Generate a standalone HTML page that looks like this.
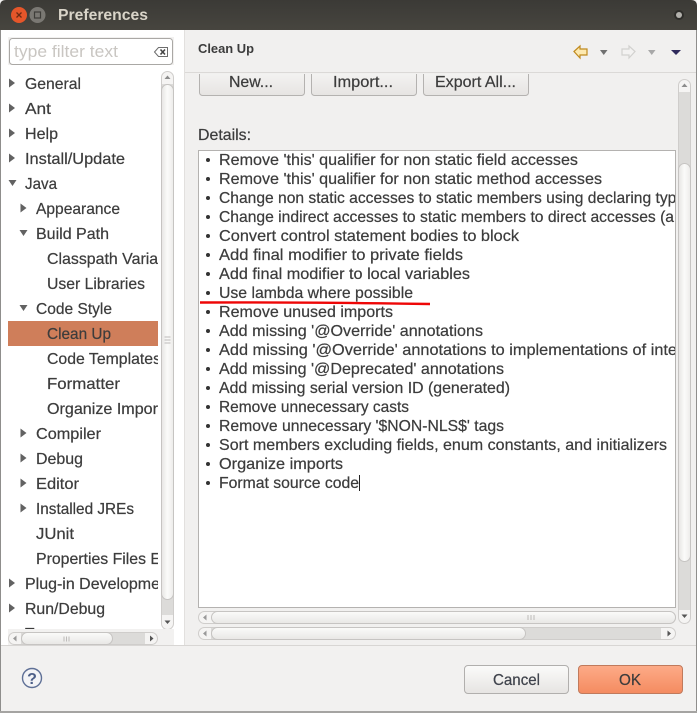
<!DOCTYPE html>
<html><head><meta charset="utf-8"><style>
html,body{margin:0;padding:0;background:#f2f1f0;width:697px;height:713px;overflow:hidden}
svg{display:block;font-family:"Liberation Sans",sans-serif}
.t{stroke:#3c3c3c;stroke-width:.22px}
</style></head><body>
<svg width="697" height="713" viewBox="0 0 697 713" xmlns="http://www.w3.org/2000/svg">
<defs>
<linearGradient id="tb" x1="0" y1="0" x2="0" y2="1"><stop offset="0" stop-color="#3b3a36"/><stop offset="1" stop-color="#47453f"/></linearGradient>
<linearGradient id="btn" x1="0" y1="0" x2="0" y2="1"><stop offset="0" stop-color="#fbfbfa"/><stop offset="1" stop-color="#e6e4e2"/></linearGradient>
<linearGradient id="ok" x1="0" y1="0" x2="0" y2="1"><stop offset="0" stop-color="#fdab88"/><stop offset="1" stop-color="#f48b60"/></linearGradient>
<linearGradient id="vth" x1="0" y1="0" x2="1" y2="0"><stop offset="0" stop-color="#e6e5e3"/><stop offset=".5" stop-color="#fbfbfa"/><stop offset="1" stop-color="#ecebe9"/></linearGradient>
<linearGradient id="hth" x1="0" y1="0" x2="0" y2="1"><stop offset="0" stop-color="#fbfbfa"/><stop offset="1" stop-color="#e8e7e5"/></linearGradient>
<clipPath id="ct"><rect x="8" y="71" width="150" height="558"/></clipPath>
<clipPath id="cd"><rect x="199" y="151" width="476" height="456"/></clipPath>
<clipPath id="cb"><rect x="190" y="74" width="350" height="30"/></clipPath>
</defs>

<rect width="697" height="713" fill="#f2f1f0"/>
<rect x="1" y="30" width="183" height="615" fill="#fff"/>
<rect x="184" y="30" width="1" height="615" fill="#e2e0de"/>
<rect x="0" y="30" width="1" height="683" fill="#8f8e8c"/>
<rect x="696" y="30" width="1" height="683" fill="#8f8e8c"/>
<rect x="0" y="711" width="697" height="2" fill="#a5a4a2"/>

<!-- title bar -->
<path d="M0 30V6Q0 0 6 0H691Q697 0 697 6V30Z" fill="url(#tb)"/>
<circle cx="19" cy="15" r="8" fill="#e5562a"/>
<path d="M16.500 12.500l5 5m0-5l-5 5" stroke="#6e2a12" stroke-width="1.300"/>
<circle cx="37.500" cy="15" r="8" fill="#7a7873"/>
<rect x="34.500" y="12" width="6" height="6" fill="none" stroke="#3e3d39" stroke-width="1.200"/>
<circle cx="679" cy="15" r="5" fill="#2e2d2a"/><circle cx="679" cy="15" r="3" fill="#b3b1ac"/>
<text x="58" y="20" font-size="16" font-weight="bold" fill="#d9d4c8" textLength="90" lengthAdjust="spacingAndGlyphs">Preferences</text>

<!-- filter -->
<rect x="8" y="37" width="166" height="28" fill="#f2f1f0"/>
<rect x="9.500" y="38.500" width="163" height="26" rx="3" fill="#fff" stroke="#aaa8a5"/>
<text x="14" y="57" font-size="16.500" fill="#c9c6c2" textLength="104" lengthAdjust="spacingAndGlyphs">type filter text</text>
<path d="M154.500 52l4-4.500h9v9h-9z" fill="#fff" stroke="#6d6d6d"/>
<path d="M160.500 49.500l4.500 5m0-5l-4.500 5" stroke="#444" stroke-width="1.600"/>

<!-- tree -->
<rect x="8" y="321" width="150" height="25" fill="#cf7e5a"/>
<g clip-path="url(#ct)" font-size="16" fill="#3c3c3c" class="t">
<text x="25" y="89" textLength="56" lengthAdjust="spacingAndGlyphs">General</text>
<text x="25" y="114" textLength="26" lengthAdjust="spacingAndGlyphs">Ant</text>
<text x="25" y="139" textLength="33" lengthAdjust="spacingAndGlyphs">Help</text>
<text x="25" y="164" textLength="100" lengthAdjust="spacingAndGlyphs">Install/Update</text>
<text x="25" y="189" textLength="32" lengthAdjust="spacingAndGlyphs">Java</text>
<text x="36" y="214" textLength="84" lengthAdjust="spacingAndGlyphs">Appearance</text>
<text x="36" y="239" textLength="73" lengthAdjust="spacingAndGlyphs">Build Path</text>
<text x="47" y="264" textLength="120" lengthAdjust="spacingAndGlyphs">Classpath Variab</text>
<text x="47" y="289" textLength="98" lengthAdjust="spacingAndGlyphs">User Libraries</text>
<text x="36" y="314" textLength="76" lengthAdjust="spacingAndGlyphs">Code Style</text>
<text x="47" y="339" textLength="64" lengthAdjust="spacingAndGlyphs">Clean Up</text>
<text x="47" y="364" textLength="114" lengthAdjust="spacingAndGlyphs">Code Templates</text>
<text x="47" y="389" textLength="73" lengthAdjust="spacingAndGlyphs">Formatter</text>
<text x="47" y="414" textLength="111" lengthAdjust="spacingAndGlyphs">Organize Impor</text>
<text x="36" y="439" textLength="65" lengthAdjust="spacingAndGlyphs">Compiler</text>
<text x="36" y="464" textLength="47" lengthAdjust="spacingAndGlyphs">Debug</text>
<text x="36" y="489" textLength="43" lengthAdjust="spacingAndGlyphs">Editor</text>
<text x="36" y="514" textLength="98" lengthAdjust="spacingAndGlyphs">Installed JREs</text>
<text x="36" y="539" textLength="38" lengthAdjust="spacingAndGlyphs">JUnit</text>
<text x="36" y="564" textLength="125" lengthAdjust="spacingAndGlyphs">Properties Files E</text>
<text x="25" y="589" textLength="135" lengthAdjust="spacingAndGlyphs">Plug-in Developme</text>
<text x="25" y="614" textLength="80" lengthAdjust="spacingAndGlyphs">Run/Debug</text>
<text x="25" y="639" textLength="38" lengthAdjust="spacingAndGlyphs">Team</text>
</g>
<g fill="#626262">
<path d="M9 78.500l6 4.500-6 4.500z"/><path d="M9 103.500l6 4.500-6 4.500z"/><path d="M9 128.500l6 4.500-6 4.500z"/><path d="M9 153.500l6 4.500-6 4.500z"/>
<path d="M8.500 180h8l-4 6z"/>
<path d="M20.500 203.500l6 4.500-6 4.500z"/>
<path d="M19.500 230h8l-4 6z"/>
<path d="M19.500 305h8l-4 6z"/>
<path d="M20.500 428.500l6 4.500-6 4.500z"/><path d="M20.500 453.500l6 4.500-6 4.500z"/><path d="M20.500 478.500l6 4.500-6 4.500z"/><path d="M20.500 503.500l6 4.500-6 4.500z"/>
<path d="M9 578.500l6 4.500-6 4.500z"/><path d="M9 603.500l6 4.500-6 4.500z"/>
</g>

<!-- left vertical scrollbar -->
<rect x="161.500" y="71.500" width="12" height="558" rx="6" fill="#f5f4f3" stroke="#cfcdcb"/>
<rect x="162" y="84" width="11" height="531" fill="#dcdbd9"/>
<rect x="161.500" y="84.500" width="12" height="515" rx="6" fill="url(#vth)" stroke="#c6c4c2"/>
<path d="M164.500 337h6M164.500 340h6M164.500 343h6" stroke="#bdbbb9"/>
<path d="M167.500 75.500l3 3.500h-6z" fill="#8c8c8c"/>
<path d="M167.500 624l-3-3.500h6z" fill="#555"/>

<!-- left horizontal scrollbar -->
<rect x="8" y="629" width="166" height="16" fill="#f2f1f0"/>
<rect x="8.500" y="632.500" width="149" height="12" rx="6" fill="#f5f4f3" stroke="#cfcdcb"/>
<rect x="21" y="633" width="124" height="11" fill="#dcdbd9"/>
<rect x="21.500" y="632.500" width="91" height="12" rx="6" fill="url(#hth)" stroke="#c6c4c2"/>
<path d="M64 636.500v5M66.500 636.500v5M69 636.500v5" stroke="#bdbbb9"/>
<path d="M13 638.500l3.500-3v6z" fill="#999"/>
<path d="M153.500 638.500l-3.500-3v6z" fill="#555"/>

<!-- right header -->
<rect x="185" y="30" width="511" height="615" fill="#f1f0ef"/>
<text x="198" y="53" font-size="12.500" font-weight="bold" fill="#3c3c3c" textLength="56" lengthAdjust="spacingAndGlyphs">Clean Up</text>
<rect x="185" y="72" width="511" height="1" fill="#dbd9d7"/>
<path d="M574 51.500l6-5.500v3h7v6h-7v3z" fill="#fde9b0" stroke="#c08a1e" stroke-width="1.200"/>
<path d="M600 50h7.500l-3.750 5z" fill="#707070"/>
<path d="M635 51.500l-6-5.500v3h-7v6h7v3z" fill="#f3f2f1" stroke="#d2d1cf" stroke-width="1.200"/>
<path d="M648 50h7.500l-3.750 5z" fill="#a8a8a8"/>
<path d="M671 50h10l-5 5z" fill="#2f2a5c"/>

<!-- clipped buttons -->
<g clip-path="url(#cb)">
<rect x="199.500" y="60.500" width="105" height="35" rx="3" fill="url(#btn)" stroke="#b4b2b0"/>
<rect x="311.500" y="60.500" width="105" height="35" rx="3" fill="url(#btn)" stroke="#b4b2b0"/>
<rect x="423.500" y="60.500" width="105" height="35" rx="3" fill="url(#btn)" stroke="#b4b2b0"/>
<g font-size="16" fill="#3c3c3c" class="t">
<text x="229" y="87" textLength="44" lengthAdjust="spacingAndGlyphs">New...</text>
<text x="333" y="87" textLength="60" lengthAdjust="spacingAndGlyphs">Import...</text>
<text x="435" y="87" textLength="81" lengthAdjust="spacingAndGlyphs">Export All...</text>
</g></g>

<text x="198" y="140" font-size="16" fill="#3c3c3c" class="t" textLength="53" lengthAdjust="spacingAndGlyphs">Details:</text>

<!-- details box -->
<rect x="198.500" y="150.500" width="477" height="457" fill="#fff" stroke="#b4b2b0"/>
<g fill="#333">
<circle cx="208" cy="160" r="2"/><circle cx="208" cy="179" r="2"/><circle cx="208" cy="198" r="2"/><circle cx="208" cy="217" r="2"/><circle cx="208" cy="236" r="2"/><circle cx="208" cy="255" r="2"/><circle cx="208" cy="274" r="2"/><circle cx="208" cy="293" r="2"/><circle cx="208" cy="312" r="2"/><circle cx="208" cy="331" r="2"/><circle cx="208" cy="350" r="2"/><circle cx="208" cy="369" r="2"/><circle cx="208" cy="388" r="2"/><circle cx="208" cy="407" r="2"/><circle cx="208" cy="426" r="2"/><circle cx="208" cy="445" r="2"/><circle cx="208" cy="464" r="2"/><circle cx="208" cy="483" r="2"/>
</g>
<g clip-path="url(#cd)" font-size="16" fill="#3c3c3c" class="t">
<text x="219" y="165" textLength="359" lengthAdjust="spacingAndGlyphs">Remove 'this' qualifier for non static field accesses</text>
<text x="219" y="184" textLength="383" lengthAdjust="spacingAndGlyphs">Remove 'this' qualifier for non static method accesses</text>
<text x="219" y="203" textLength="466" lengthAdjust="spacingAndGlyphs">Change non static accesses to static members using declaring type</text>
<text x="219" y="222" textLength="455" lengthAdjust="spacingAndGlyphs">Change indirect accesses to static members to direct accesses (a</text>
<text x="219" y="241" textLength="300" lengthAdjust="spacingAndGlyphs">Convert control statement bodies to block</text>
<text x="219" y="260" textLength="244" lengthAdjust="spacingAndGlyphs">Add final modifier to private fields</text>
<text x="219" y="279" textLength="251" lengthAdjust="spacingAndGlyphs">Add final modifier to local variables</text>
<text x="219" y="298" textLength="194" lengthAdjust="spacingAndGlyphs">Use lambda where possible</text>
<text x="219" y="317" textLength="174" lengthAdjust="spacingAndGlyphs">Remove unused imports</text>
<text x="219" y="336" textLength="264" lengthAdjust="spacingAndGlyphs">Add missing '@Override' annotations</text>
<text x="219" y="355" textLength="458" lengthAdjust="spacingAndGlyphs">Add missing '@Override' annotations to implementations of inte</text>
<text x="219" y="374" textLength="285" lengthAdjust="spacingAndGlyphs">Add missing '@Deprecated' annotations</text>
<text x="219" y="393" textLength="291" lengthAdjust="spacingAndGlyphs">Add missing serial version ID (generated)</text>
<text x="219" y="412" textLength="190" lengthAdjust="spacingAndGlyphs">Remove unnecessary casts</text>
<text x="219" y="431" textLength="285" lengthAdjust="spacingAndGlyphs">Remove unnecessary '$NON-NLS$' tags</text>
<text x="219" y="450" textLength="448" lengthAdjust="spacingAndGlyphs">Sort members excluding fields, enum constants, and initializers</text>
<text x="219" y="469" textLength="124" lengthAdjust="spacingAndGlyphs">Organize imports</text>
<text x="219" y="488" textLength="140" lengthAdjust="spacingAndGlyphs">Format source code</text>
</g>
<rect x="359" y="475" width="1" height="16" fill="#222"/>
<path d="M200 302.500Q300 302 430 304" fill="none" stroke="#ee0606" stroke-width="2.400"/>

<!-- details h scrollbar 1 -->
<rect x="198.500" y="611.500" width="477" height="12" rx="6" fill="#f5f4f3" stroke="#cfcdcb"/>
<rect x="211.500" y="611.500" width="464" height="12" rx="6" fill="url(#hth)" stroke="#c6c4c2"/>
<path d="M528 615v5M531 615v5M534 615v5" stroke="#bdbbb9"/>
<path d="M203 617.500l3.500-3v6z" fill="#999"/>
<!-- details h scrollbar 2 -->
<rect x="198.500" y="627.500" width="477" height="12" rx="6" fill="#f5f4f3" stroke="#cfcdcb"/>
<rect x="211" y="628" width="450" height="11" fill="#dcdbd9"/>
<rect x="211.500" y="627.500" width="314" height="12" rx="6" fill="url(#hth)" stroke="#c6c4c2"/>
<path d="M203 633.500l3.500-3v6z" fill="#999"/>
<path d="M671 633.500l-3.500-3v6z" fill="#555"/>

<!-- right v scrollbar -->
<rect x="678.500" y="79.500" width="12" height="544" rx="6" fill="#f5f4f3" stroke="#cfcdcb"/>
<rect x="679" y="92" width="11" height="518" fill="#dcdbd9"/>
<rect x="678.500" y="163.500" width="12" height="398" rx="6" fill="url(#vth)" stroke="#c6c4c2"/>
<path d="M684.500 83.500l3 3.500h-6z" fill="#8c8c8c"/>
<path d="M684.500 618l-3-3.500h6z" fill="#555"/>

<!-- bottom -->
<rect x="1" y="645" width="695" height="66" fill="#f2f1f0"/>
<rect x="1" y="645" width="695" height="1" fill="#d8d6d4"/>
<circle cx="32" cy="678" r="9.500" fill="#f4f4f6" stroke="#5f7096" stroke-width="1.400"/>
<text x="32" y="684" font-size="16" font-weight="bold" fill="#4d5f88" text-anchor="middle">?</text>
<rect x="464.500" y="665.500" width="104" height="28" rx="3.500" fill="url(#btn)" stroke="#b1afad"/>
<rect x="578.500" y="665.500" width="104" height="28" rx="3.500" fill="url(#ok)" stroke="#c07a5c"/>
<text x="493" y="685" font-size="16" fill="#3f4450" class="t" textLength="47" lengthAdjust="spacingAndGlyphs">Cancel</text>
<text x="619" y="685" font-size="16" fill="#3c3c3c" class="t" textLength="22" lengthAdjust="spacingAndGlyphs">OK</text>
</svg>
</body></html>
